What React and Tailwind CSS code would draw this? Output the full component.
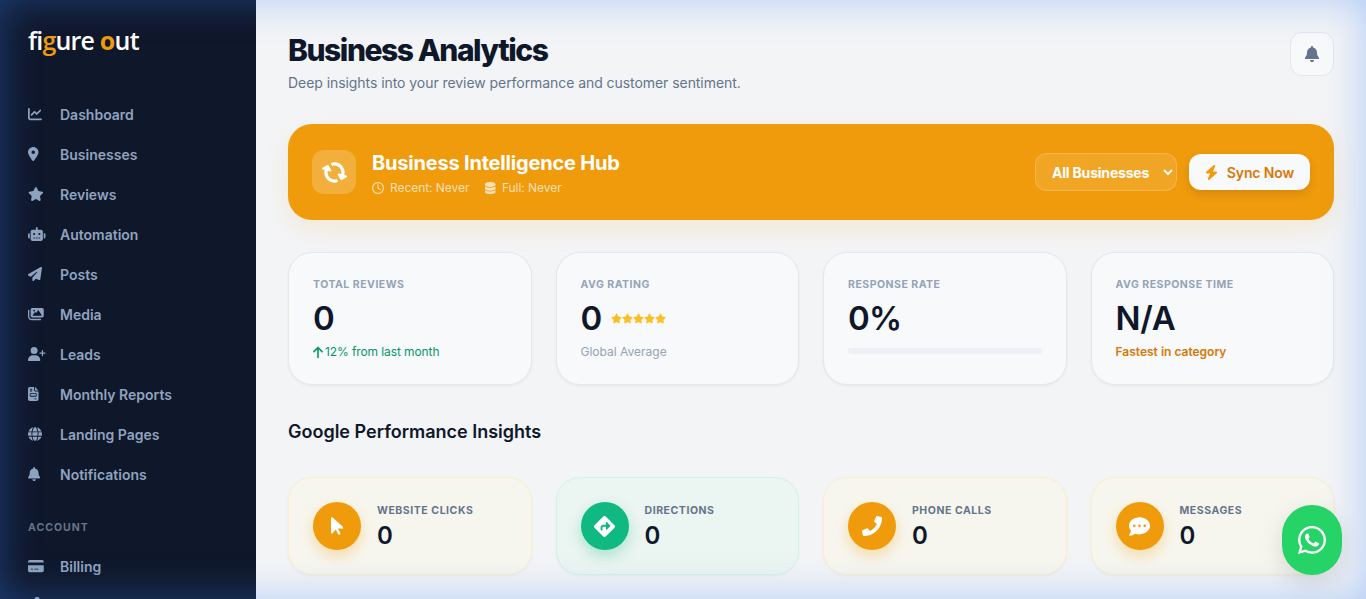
import React from "react";
import {
  FaChartLine, FaLocationDot, FaStar, FaRobot, FaPaperPlane, FaImages, FaUserPlus, FaFileInvoice,
  FaGlobe, FaBell, FaCreditCard, FaGear, FaRegClock, FaDatabase, FaBolt, FaArrowUp,
  FaArrowPointer, FaDiamondTurnRight, FaCommentDots, FaWhatsapp,
} from "react-icons/fa6";
import { FaPhone, FaSyncAlt } from "react-icons/fa";

const mainNav = [
  [FaChartLine, "Dashboard", "w-[14px]"], [FaLocationDot, "Businesses", "w-[10.5px]"], [FaStar, "Reviews", "w-[15.75px]"],
  [FaRobot, "Automation", "w-[17.5px]"], [FaPaperPlane, "Posts", "w-[14px]"], [FaImages, "Media", "w-[15.75px]"],
  [FaUserPlus, "Leads", "w-[17.5px]"], [FaFileInvoice, "Monthly Reports", "w-[10.5px]"],
  [FaGlobe, "Landing Pages", "w-[14px]"], [FaBell, "Notifications", "w-[12.25px]"],
];

function NavItem({ icon: Icon, label, width }) {
  return (
    <div className="flex h-10 shrink-0 items-center px-3 text-[14px] font-semibold text-[#8fa3bf]">
      <span className="flex w-8 shrink-0 items-center"><Icon className={`h-[14px] ${width}`} /></span>
      <span>{label}</span>
    </div>
  );
}

function StatCard({ label, children }) {
  return (
    <div className="h-[133px] rounded-3xl border border-[#e2e8f0] bg-[#f8f9fa] p-6 shadow-[0_1px_3px_rgba(15,23,42,0.05)]">
      <div className="text-[10.5px] leading-4 font-bold tracking-[0.5px] text-[#94a3b8] uppercase">{label}</div>
      {children}
    </div>
  );
}

function InsightCard({ icon: Icon, label, green, iconClass }) {
  return (
    <div className={`flex h-[98px] items-center gap-4 rounded-3xl border px-6 shadow-[0_1px_3px_rgba(15,23,42,0.04)] ${green ? "border-[#d1f5e3] bg-[#ebf5f1]" : "border-[#fcefc7] bg-[#f7f6ee]"}`}>
      <div className={`flex h-12 w-12 shrink-0 items-center justify-center rounded-full text-white ${green ? "bg-[#10b981] shadow-[0_6px_14px_rgba(16,185,129,0.3)]" : "bg-[#f09b0c] shadow-[0_6px_14px_rgba(245,158,11,0.3)]"}`}>
        <Icon className={iconClass} />
      </div>
      <div className="pt-[2px]">
        <div className="text-[10.5px] leading-4 font-bold tracking-[0.55px] text-[#64748b] uppercase">{label}</div>
        <div className="mt-px text-[24px] leading-8 font-semibold text-[#0f172a]">0</div>
      </div>
    </div>
  );
}

export default function App() {
  return (
    <div className="relative flex h-screen overflow-hidden bg-[#f3f4f6] font-['Inter',sans-serif]">
      <aside className="flex h-full w-64 shrink-0 flex-col overflow-hidden bg-[#0f172a] px-4">
        <div className="h-[94px] shrink-0 pt-[22px] pl-3 font-['Open_Sans',sans-serif] text-[25px] leading-9 font-semibold tracking-[-0.8px] whitespace-pre text-white">
          fi<span className="text-[#f09b0c]">g</span>ure <span className="font-bold text-[#f09b0c]">o</span>ut
        </div>
        {mainNav.map(([icon, label, width]) => <NavItem key={label} icon={icon} label={label} width={width} />)}
        <div className="mt-[26px] mb-[10px] shrink-0 px-3 text-[10.5px] leading-4 font-bold tracking-[1px] text-[#64748b] uppercase">Account</div>
        <NavItem icon={FaCreditCard} label="Billing" width="w-[15.75px]" />
        <div className="flex h-10 shrink-0 items-center px-3 text-[#8fa3bf]"><FaGear className="h-[18px] w-[18px]" /></div>
      </aside>

      <main className="min-w-0 flex-1 overflow-hidden px-8 pt-8">
        <header className="mb-[31px] flex items-start justify-between">
          <div>
            <h1 className="text-[30px] leading-9 font-extrabold tracking-[-1.45px] text-[#0f172a]">Business Analytics</h1>
            <p className="mt-[5px] text-[14px] leading-5 tracking-[-0.06px] text-[#64748b]">Deep insights into your review performance and customer sentiment.</p>
          </div>
          <button className="flex h-11 w-11 items-center justify-center rounded-xl border border-[#e2e8f0] bg-[#f8f9fa] text-[#64748b]">
            <FaBell className="h-4 w-[14px]" />
          </button>
        </header>

        <section className="mb-8 flex h-24 items-center justify-between rounded-3xl bg-[#f09b0c] px-6 shadow-[0_10px_24px_rgba(245,158,11,0.12)]">
          <div className="flex items-center gap-4">
            <div className="flex h-11 w-11 items-center justify-center rounded-xl bg-white/20 text-white"><FaSyncAlt size={21} className="rotate-[60deg]" /></div>
            <div>
              <div className="text-[20px] leading-7 font-bold tracking-[-0.2px] text-white">Business Intelligence Hub</div>
              <div className="mt-[3px] flex items-center gap-4 text-[12px] leading-4 tracking-[-0.05px] text-white/70">
                <span className="flex items-center gap-[6px]"><FaRegClock size={12} />Recent: Never</span>
                <span className="flex items-center gap-[6px]"><FaDatabase className="h-3 w-[10.5px]" />Full: Never</span>
              </div>
            </div>
          </div>
          <div className="flex items-center gap-3">
            <select className="h-[38px] w-[142px] rounded-xl border border-white/20 bg-white/10 pl-3 text-[14px] font-bold tracking-[-0.2px] text-white">
              <option>All Businesses</option>
            </select>
            <button className="flex h-9 w-[121px] items-center justify-center gap-[9px] rounded-xl bg-[#f8f9fa] text-[14px] font-semibold tracking-[-0.1px] text-[#d97706] shadow-[0_4px_10px_rgba(0,0,0,0.12)]">
              <FaBolt className="h-[15px] w-[13px] text-[#f09b0c]" />Sync Now
            </button>
          </div>
        </section>

        <section className="grid grid-cols-4 gap-6">
          <StatCard label="Total Reviews">
            <div className="mt-[7px] text-[33px] leading-9 font-semibold text-[#0f172a]">0</div>
            <div className="mt-2 flex items-center gap-[2px] text-[12px] leading-4 tracking-[-0.1px] text-[#059669]"><FaArrowUp className="h-[13px] w-[10px]" />12% from last month</div>
          </StatCard>
          <StatCard label="Avg Rating">
            <div className="mt-[7px] flex items-center gap-[9px]">
              <span className="text-[33px] leading-9 font-semibold text-[#0f172a]">0</span>
              <span className="flex text-[#fbbf24]">
                <FaStar size={11} /><FaStar size={11} /><FaStar size={11} /><FaStar size={11} /><FaStar size={11} />
              </span>
            </div>
            <div className="mt-2 text-[12px] leading-4 text-[#94a3b8]">Global Average</div>
          </StatCard>
          <StatCard label="Response Rate">
            <div className="mt-[7px] text-[33px] leading-9 font-semibold tracking-[-0.7px] text-[#0f172a]">0%</div>
            <div className="mt-3 h-[6px] rounded-full bg-[#edf0f5]" />
          </StatCard>
          <StatCard label="Avg Response Time">
            <div className="mt-[7px] text-[33px] leading-9 font-semibold tracking-[-0.3px] text-[#0f172a]">N/A</div>
            <div className="mt-2 text-[12px] leading-4 font-semibold text-[#d97706]">Fastest in category</div>
          </StatCard>
        </section>

        <h2 className="mt-[33px] mb-[31px] text-[18px] leading-7 font-semibold text-[#0f172a]">Google Performance Insights</h2>

        <section className="grid grid-cols-4 gap-6">
          <InsightCard icon={FaArrowPointer} label="Website Clicks" iconClass="h-5 w-[12.5px]" />
          <InsightCard icon={FaDiamondTurnRight} label="Directions" green iconClass="h-[21px] w-[21px]" />
          <InsightCard icon={FaPhone} label="Phone Calls" iconClass="h-5 w-5" />
          <InsightCard icon={FaCommentDots} label="Messages" iconClass="h-[21px] w-[21px]" />
        </section>
      </main>

      <div className="pointer-events-none absolute inset-0 shadow-[inset_0_0_40px_rgba(59,130,246,0.36)]" />

      <button className="absolute right-6 bottom-6 flex h-[70px] w-[60px] items-center justify-center rounded-full bg-[#25d366] text-white shadow-[0_8px_24px_rgba(0,0,0,0.12)]">
        <FaWhatsapp className="h-8 w-7" />
      </button>
    </div>
  );
}
